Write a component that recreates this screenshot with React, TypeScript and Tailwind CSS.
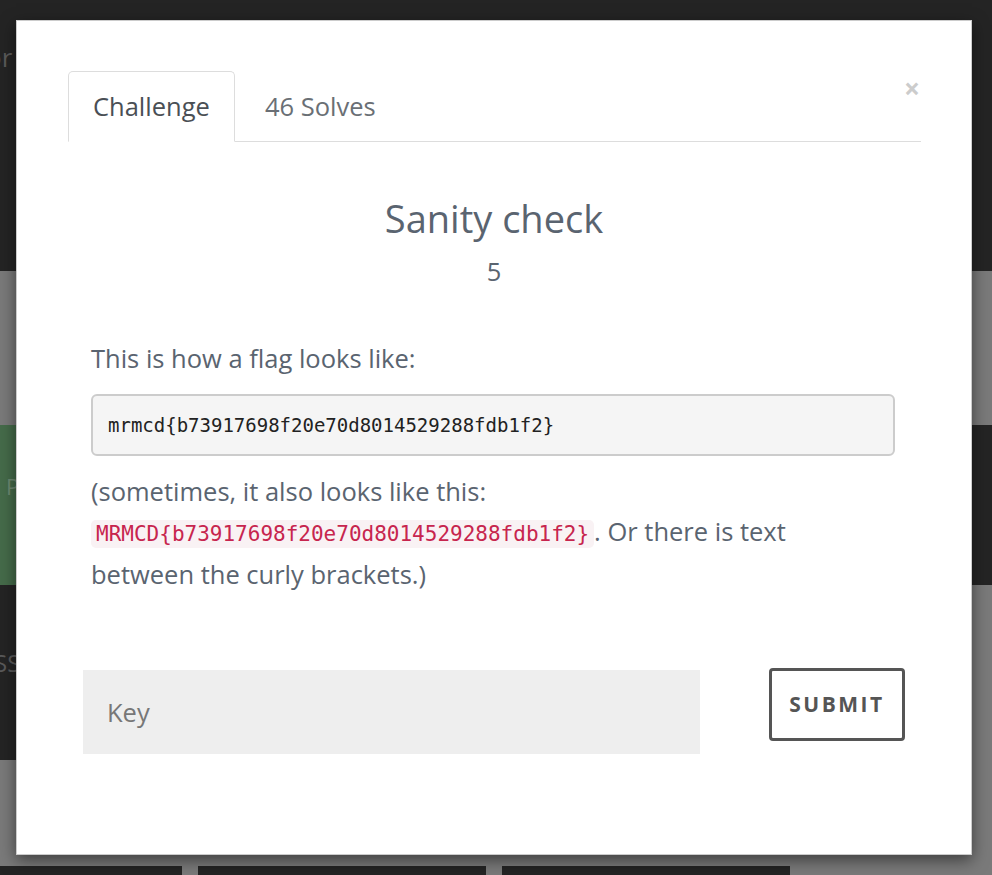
import React from 'react';

const flag = 'b73917698f20e70d8014529288fdb1f2';

const Backdrop = () => (
  <div className="flex flex-col w-[992px] h-[875px] bg-[#7a7a7a] font-['Open_Sans',sans-serif]">
    <div className="h-[271px] bg-[#242424] pt-[38px] text-[26px] text-[#5a5a5a]">
      <span className="ml-[-14px]">or</span>
    </div>
    <div className="h-[154px]" />
    <div className="flex h-[160px]">
      <div className="w-[490px] bg-[#456b4a] pt-[45px] pl-[6px] text-[22px] text-[#6e8a72]">P</div>
      <div className="flex-1" />
      <div className="w-[30px] bg-[#242424]" />
    </div>
    <div className="flex h-[175px]">
      <div className="w-[490px] bg-[#242424] pt-[60px] text-[24px] text-[#5a5a5a]">
        <span className="ml-[-6px]">SS</span>
      </div>
    </div>
    <div className="h-[106px]" />
    <div className="flex gap-[16px] h-[9px]">
      <div className="w-[182px] bg-[#242424]" />
      <div className="w-[288px] bg-[#242424]" />
      <div className="w-[288px] bg-[#242424]" />
    </div>
  </div>
);

export default function App() {
  return (
    <div className="relative w-[992px] h-[875px] overflow-hidden">
      <Backdrop />
      {/* modal */}
      <div className="absolute left-[16px] top-[20px] w-[956px] h-[835px] bg-white shadow-[0_5px_15px_rgba(0,0,0,0.5)] border border-black/20 font-['Open_Sans',sans-serif] text-[#5a6470]">
        <div className="relative px-[51px] pt-[50px]">
          <button className="absolute right-[51px] top-[53px] text-[#cccccc] text-[28px] font-bold leading-none">×</button>
          <div className="flex border-b border-[#ddd] w-[853px]">
            <div className="-mb-px h-[71px] px-[24px] flex items-center border border-[#ddd] border-b-white rounded-t-[5px] bg-white text-[25.5px] text-[#4a4f55]">
              Challenge
            </div>
            <div className="h-[70px] px-[30px] flex items-center text-[25.5px] text-[#6a6f75]">46 Solves</div>
          </div>

          <div className="flex flex-col items-center mt-[50px]">
            <h2 className="text-[38px] leading-[52px] text-[#5a6470]">Sanity check</h2>
            <div className="text-[25.5px] leading-[34px] mt-[10px] text-[#5a6470]">5</div>
          </div>

          <div className="pl-[23px] pr-[25px] mt-[50px] text-[25.5px] leading-[40px] text-[#5a6470]">
            <p>This is how a flag looks like:</p>
            <pre className="mt-[16px] h-[62px] flex items-center px-[15px] bg-[#f5f5f5] border-2 border-[#cccccc] rounded-[6px] font-['DejaVu_Sans_Mono',monospace] text-[19px] text-[#222]">
              mrmcd{'{'}{flag}{'}'}
            </pre>
            <p className="mt-[15px] pr-[12px]">
              (sometimes, it also looks like this:{' '}
              <code className="px-[5px] py-[2px] bg-[#f9f2f4] rounded-[5px] text-[#c7254e] font-['DejaVu_Sans_Mono',monospace] text-[21px]">
                MRMCD{'{'}{flag}{'}'}
              </code>
              . Or there is text between the curly brackets.)
            </p>
          </div>

          <div className="flex items-start mt-[76px] pl-[15px]">
            <div className="w-[617px] h-[84px] bg-[#eeeeee] flex items-center pl-[24px] text-[25.5px] text-[#777]">
              Key
            </div>
            <button className="ml-[69px] mt-[-2px] w-[136px] h-[73px] border-[3px] border-[#555] rounded-[4px] text-[21px] font-bold tracking-[2.5px] text-[#555]">
              SUBMIT
            </button>
          </div>
        </div>
      </div>
    </div>
  );
}
